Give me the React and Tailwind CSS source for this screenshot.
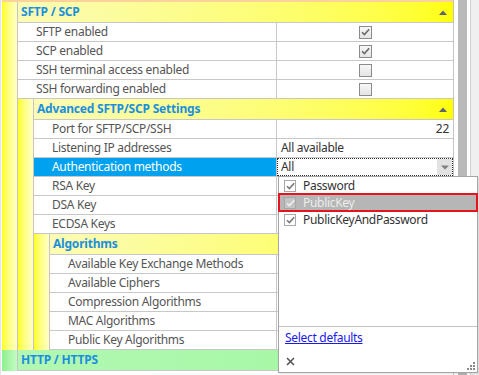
import React from 'react';

function GridCheck({ checked }) {
  return (
    <span className="flex h-[13px] w-[13px] items-center justify-center border border-[#8c8c8c] bg-linear-to-b from-[#f7f7f7] to-[#e4e4e4]">
      {checked && (
        <svg width="9" height="8" viewBox="0 0 9 8">
          <path d="M1 4.2 L3.4 6.6 L8.2 1.2" fill="none" stroke="#6a6a6a" strokeWidth="1.6" />
        </svg>
      )}
    </span>
  );
}

function UpArrow() {
  return (
    <svg width="8" height="5" viewBox="0 0 8 5">
      <path d="M0 5 L4 0.5 L8 5 Z" fill="#5f6070" />
    </svg>
  );
}

function Header({ title, green }) {
  return (
    <div
      className={`flex h-[21px] items-center justify-between border-b border-[#c8c8c8] pl-[3px] pr-[6px] ${
        green ? 'bg-linear-to-r from-[#b2f8b2] to-[#a0f7a0]' : 'bg-linear-to-r from-[#fbfbb4] to-[#ffff00]'
      }`}
    >
      <span className="text-[12px] font-bold tracking-[-0.2px] text-[#1b8fdf]">{title}</span>
      {!green && <UpArrow />}
    </div>
  );
}

function Section({ title, green, children }) {
  return (
    <div className="flex">
      <div
        className={`w-[16px] shrink-0 border-r border-[#c6c6c6] ${
          green ? 'bg-linear-to-r from-[#8ef08e] to-[#c4fac4]' : 'bg-linear-to-r from-[#ffff00] to-[#ffffc4]'
        }`}
      />
      <div className="min-w-0 flex-1">
        <Header title={title} green={green} />
        {children}
      </div>
    </div>
  );
}

function Row({ label, selected, children, valueClass = '' }) {
  return (
    <div className="flex h-[19px] border-b border-[#c8c8c8]">
      <div
        className={`flex flex-1 items-center border-r border-[#c8c8c8] pl-[18px] ${
          selected ? 'bg-[#00a2f0] text-white' : 'text-[#555555]'
        }`}
      >
        {label}
      </div>
      <div className={`flex w-[176px] items-center text-[#333333] ${valueClass}`}>{children}</div>
    </div>
  );
}

function ListCheck({ dim }) {
  return (
    <span
      className={`flex h-[12px] w-[12px] items-center justify-center border border-[#a8a8a8] ${
        dim ? 'bg-[#c4c4c4]' : 'bg-white'
      }`}
    >
      <svg width="9" height="8" viewBox="0 0 9 8">
        <path d="M1 4.2 L3.4 6.6 L8.2 1.2" fill="none" stroke={dim ? '#f0f0f0' : '#777777'} strokeWidth="1.6" />
      </svg>
    </span>
  );
}

function Item({ label, active }) {
  return (
    <div
      className={`flex h-[17px] items-center gap-[7px] pl-[5px] ${
        active ? 'relative bg-[#b6b6b6] text-[#ececec] outline-2 -outline-offset-1 outline-[#e5141e]' : 'text-[#333333]'
      }`}
    >
      <ListCheck dim={active} />
      <span>{label}</span>
    </div>
  );
}

function Popup() {
  return (
    <div className="absolute left-[278px] top-[176px] flex h-[197px] w-[200px] flex-col border border-[#a6a6a6] bg-white shadow-[1px_1px_2px_rgba(0,0,0,0.12)]">
      <div className="flex-1">
        <Item label="Password" />
        <Item label="PublicKey" active />
        <Item label="PublicKeyAndPassword" />
      </div>
      <div className="relative h-[46px] border-t border-[#c2c2c2] pl-[6px] pt-[2px]">
        <div className="flex h-[18px] items-center">
          <span className="text-[#1a1aee] underline">Select defaults</span>
        </div>
        <div className="mt-[5px] flex h-[18px] items-center pl-[1px]">
          <svg width="9" height="9" viewBox="0 0 9 9">
            <path d="M1 1 L8 8 M8 1 L1 8" stroke="#555555" strokeWidth="1.6" />
          </svg>
        </div>
        <svg className="absolute bottom-[1px] right-[1px]" width="9" height="9" viewBox="0 0 9 9">
          <g fill="#8a8a8a">
            <rect x="6" y="0" width="2" height="2" />
            <rect x="3" y="3" width="2" height="2" />
            <rect x="6" y="3" width="2" height="2" />
            <rect x="0" y="6" width="2" height="2" />
            <rect x="3" y="6" width="2" height="2" />
            <rect x="6" y="6" width="2" height="2" />
          </g>
        </svg>
      </div>
    </div>
  );
}

export default function App() {
  return (
    <div className="relative h-[375px] w-[479px] overflow-hidden bg-white font-['Noto_Sans',sans-serif] text-[12px] tracking-[-0.3px]">
      <div className="flex h-full">
        <div className="w-[454px] shrink-0 border-r border-l border-[#c4c4c4] border-l-[#e4e4e4] pl-[1px]">
          <div className="h-[2px] bg-[#fbd29c]" />
          <Section title="SFTP / SCP">
            <Row label="SFTP enabled" valueClass="justify-center">
              <GridCheck checked />
            </Row>
            <Row label="SCP enabled" valueClass="justify-center">
              <GridCheck checked />
            </Row>
            <Row label="SSH terminal access enabled" valueClass="justify-center">
              <GridCheck />
            </Row>
            <Row label="SSH forwarding enabled" valueClass="justify-center">
              <GridCheck />
            </Row>
            <Section title="Advanced SFTP/SCP Settings">
              <Row label="Port for SFTP/SCP/SSH" valueClass="justify-end pr-[4px]">
                22
              </Row>
              <Row label="Listening IP addresses" valueClass="pl-[4px]">
                All available
              </Row>
              <Row label="Authentication methods" selected valueClass="border border-dotted border-[#333333]">
                <span className="flex-1 pl-[3px]">All</span>
                <span className="flex h-full w-[15px] items-center justify-center bg-[#e2e2e2]">
                  <svg width="8" height="5" viewBox="0 0 8 5">
                    <path d="M0 0.5 L8 0.5 L4 4.5 Z" fill="#808080" />
                  </svg>
                </span>
              </Row>
              <Row label="RSA Key" />
              <Row label="DSA Key" />
              <Row label="ECDSA Keys" />
              <Section title="Algorithms">
                <Row label="Available Key Exchange Methods" />
                <Row label="Available Ciphers" />
                <Row label="Compression Algorithms" />
                <Row label="MAC Algorithms" />
                <Row label="Public Key Algorithms" />
              </Section>
            </Section>
          </Section>
          <Section title="HTTP / HTTPS" green />
        </div>
        <div className="flex flex-1">
          <div className="w-[4px] bg-white" />
          <div className="w-[9px] bg-[#b9b9b9]" />
          <div className="w-[3px] bg-white" />
          <div className="w-[1px] bg-[#d2d2d2]" />
          <div className="flex-1 bg-[#f0f0f0]" />
        </div>
      </div>
      <Popup />
    </div>
  );
}
